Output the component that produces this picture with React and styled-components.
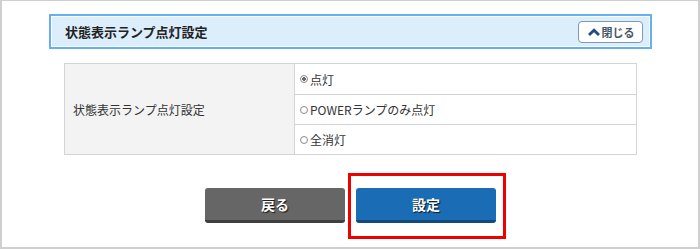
import React from "react";
import styled, { createGlobalStyle } from "styled-components";

const GlobalStyle = createGlobalStyle`
  body {
    margin: 0;
    font-family: "Noto Sans CJK JP", "Noto Sans", sans-serif;
    color: #333;
  }
`;

const Frame = styled.div`
  box-sizing: border-box;
  width: 700px;
  height: 249px;
  border: 2px solid #cfcfcf;
  border-top-width: 1px;
  padding: 13px 0 0 47px;
`;

const Header = styled.div`
  box-sizing: border-box;
  width: 603px;
  height: 35px;
  display: flex;
  align-items: center;
  justify-content: space-between;
  padding: 0 7px 0 14px;
  background: #dcedfc;
  border: 2px solid #63b1ee;
  box-shadow: inset 0 0 0 1px #ffffff;
`;

const Title = styled.h2`
  margin: 0;
  font-size: 13px;
  font-weight: 700;
  color: #222;
`;

const CloseButton = styled.button`
  box-sizing: border-box;
  width: 65px;
  height: 22px;
  display: flex;
  align-items: center;
  justify-content: center;
  gap: 2px;
  padding: 0 0 0 1px;
  background: #fff;
  border: 1px solid #7c98b8;
  border-radius: 4px;
  font-family: inherit;
  font-size: 11px;
  font-weight: 700;
  color: #46566a;
`;

const Table = styled.table`
  width: 573px;
  margin: 14px 0 0 15px;
  border-collapse: collapse;
  font-size: 12px;
  color: #333;
`;

const Label = styled.th`
  box-sizing: border-box;
  width: 230px;
  padding: 0 8px;
  text-align: left;
  font-weight: 400;
  background: #f3f3f3;
  border: 1px solid #d4d4d4;
`;

const Cell = styled.td`
  box-sizing: border-box;
  height: ${(p) => p.h}px;
  padding: 0 0 0 5px;
  border: 1px solid #d4d4d4;
`;

const Option = styled.label`
  display: flex;
  align-items: center;
  gap: 2px;
`;

const Dot = styled.span`
  box-sizing: border-box;
  width: 8px;
  height: 8px;
  border-radius: 50%;
  border: 1px solid #8a8a8a;
  background: ${(p) =>
    p.checked ? "radial-gradient(circle, #6a6a6a 0 45%, #fff 50%)" : "#fff"};
`;

const Actions = styled.div`
  display: flex;
  justify-content: center;
  gap: 11px;
  width: 603px;
  margin-top: 33px;
`;

const Button = styled.button`
  box-sizing: border-box;
  width: 140px;
  height: 35px;
  padding: 0;
  border: none;
  border-radius: 3px;
  border-bottom: 3px solid ${(p) => (p.primary ? "#124a7c" : "#3f3f3f")};
  background: ${(p) => (p.primary ? "#1a6db5" : "#666666")};
  font-family: inherit;
  font-size: 14px;
  font-weight: 700;
  color: #fff;
  text-shadow: 1px 1px 1px rgba(0, 0, 0, 0.8);
`;

const Highlight = styled.div`
  position: relative;
  &::after {
    content: "";
    position: absolute;
    top: -15px;
    left: -8px;
    right: -10px;
    bottom: -16px;
    border: 3px solid #ee0000;
  }
`;

const ChevronUp = () => (
  <svg width="12" height="8" viewBox="0 0 12 8">
    <path d="M1 7 6 2.2 11 7" fill="none" stroke="#1e4d86" strokeWidth="2.8" />
  </svg>
);

const options = [
  { text: "点灯", checked: true, h: 31 },
  { text: "POWERランプのみ点灯", checked: false, h: 30 },
  { text: "全消灯", checked: false, h: 30 },
];

export default function App() {
  return (
    <>
      <GlobalStyle />
      <Frame>
        <Header>
          <Title>状態表示ランプ点灯設定</Title>
          <CloseButton>
            <ChevronUp />
            閉じる
          </CloseButton>
        </Header>
        <Table>
          <tbody>
            {options.map((o, i) => (
              <tr key={o.text}>
                {i === 0 && <Label rowSpan={3}>状態表示ランプ点灯設定</Label>}
                <Cell h={o.h}>
                  <Option>
                    <Dot checked={o.checked} />
                    {o.text}
                  </Option>
                </Cell>
              </tr>
            ))}
          </tbody>
        </Table>
        <Actions>
          <Button>戻る</Button>
          <Highlight>
            <Button primary>設定</Button>
          </Highlight>
        </Actions>
      </Frame>
    </>
  );
}
